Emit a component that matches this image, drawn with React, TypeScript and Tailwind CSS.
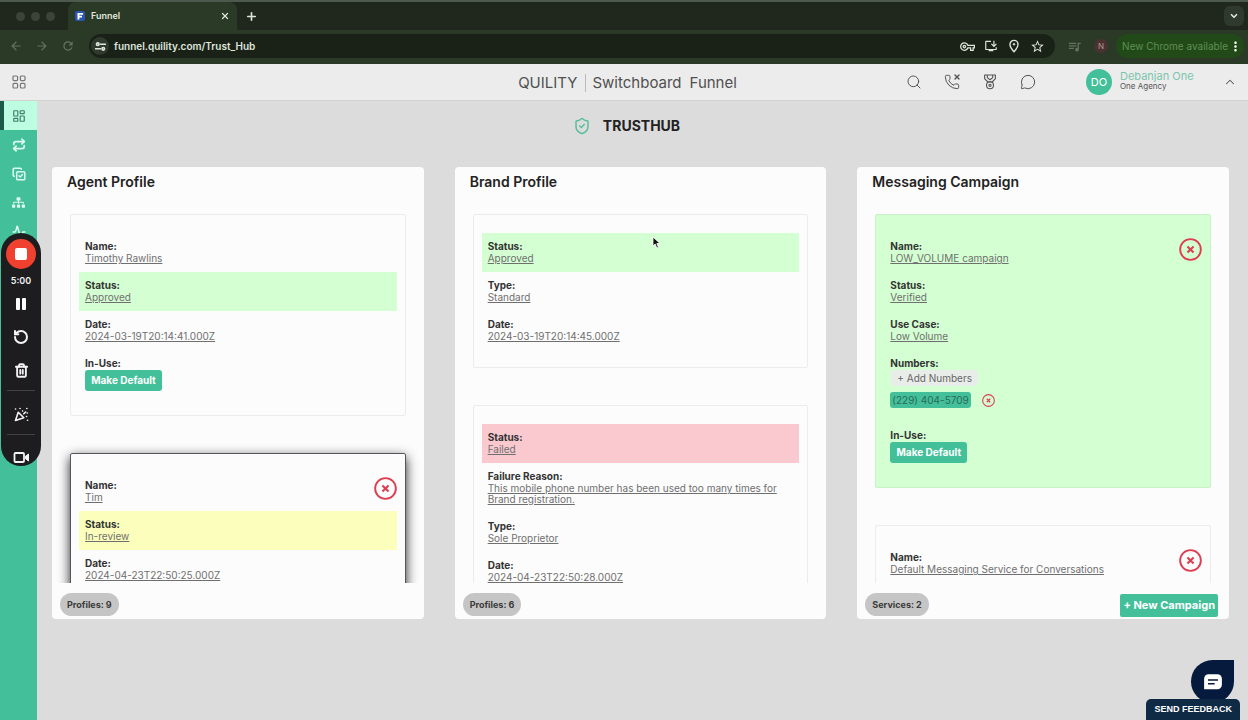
import type { ReactNode } from "react";
import clsx from "clsx";
import {
  Activity,
  ChevronDown,
  ChevronUp,
  CopyCheck,
  LayoutDashboard,
  MessageCircle,
  Phone,
  Plus,
  Repeat,
  RotateCcw,
  Search,
  ShieldCheck,
  Trash2,
  Video,
  X,
} from "lucide-react";
import { FaSitemap } from "react-icons/fa";
import {
  MdArrowBack,
  MdArrowForward,
  MdMoreVert,
  MdOutlineInstallDesktop,
  MdOutlineVpnKey,
  MdQueueMusic,
  MdRefresh,
  MdStarBorder,
} from "react-icons/md";

const BrowserBar = () => (
  <div className="border-t-2 border-[#4d594c] bg-[#20281e] text-[#dfe5dc]">
    <div className="flex h-7 items-center">
      <div className="flex w-[68px] items-center gap-[6px] pl-4">
        <span className="size-[9px] rounded-full bg-[#3b433a]" />
        <span className="size-[9px] rounded-full bg-[#3b433a]" />
        <span className="size-[9px] rounded-full bg-[#3b433a]" />
      </div>
      <div className="flex h-full w-[169px] items-center rounded-t-lg bg-[#2b3927] px-[7px]">
        <svg className="size-[10px]" viewBox="0 0 10 10">
          <rect width="10" height="10" rx="2" fill="#2856b0" />
          <path d="M2.5 2h5.5v1.8H4.4v1H7v1.7H4.4V8.5H2.5z" fill="#fff" />
        </svg>
        <span className="ml-[6px] flex-1 text-[9px] font-semibold">Funnel</span>
        <button aria-label="Close tab">
          <X size={10} strokeWidth={3} />
        </button>
      </div>
      <button aria-label="New tab" className="ml-2">
        <Plus size={13} strokeWidth={3} />
      </button>
      <button
        aria-label="Search tabs"
        className="mr-1 ml-auto flex size-5 items-center justify-center rounded-md bg-[#30392e]"
      >
        <ChevronDown size={10} strokeWidth={4} />
      </button>
    </div>
    <div className="flex h-[34px] items-center bg-[#2b3927] pr-1 pb-[2px] pl-[9px]">
      <div className="flex w-20 items-center gap-3 text-[#66705f]">
        <MdArrowBack size={14} />
        <MdArrowForward size={14} />
        <MdRefresh size={14} />
      </div>
      <div className="flex h-6 flex-1 items-center rounded-full bg-[#1a2218] pr-[10px] pl-[2px]">
        <span className="flex size-[18px] items-center justify-center rounded-full bg-[#30392e]">
          <svg
            className="size-[11px]"
            viewBox="0 0 12 12"
            fill="none"
            stroke="currentColor"
            strokeWidth="1.8"
          >
            <circle cx="3" cy="3.5" r="1.4" />
            <path d="M5.5 3.5H12M0 8.5h6.5" />
            <circle cx="9" cy="8.5" r="1.4" />
          </svg>
        </span>
        <span className="ml-[5px] flex-1 text-[10px] font-semibold">
          funnel.quility.com/Trust_Hub
        </span>
        <div className="flex items-center gap-[9px]">
          <MdOutlineVpnKey size={15} />
          <MdOutlineInstallDesktop size={14} />
          <svg className="size-[14px]" viewBox="0 0 14 14" fill="none" stroke="currentColor">
            <path d="M7 12.8C4.400 9.800 3 7.600 3 5.400a4 4 0 0 1 8 0c0 2.200-1.400 4.400-4 7.400z" strokeWidth="1.400" />
            <circle cx="7" cy="5.300" r=".8" fill="currentColor" />
          </svg>
          <MdStarBorder size={15} />
        </div>
      </div>
      <MdQueueMusic size={15} className="ml-3 text-[#66705f]" />
      <span className="mr-2 ml-3 flex size-[14px] items-center justify-center rounded-full bg-[#4a3230] text-[8px] text-[#b09a98]">
        N
      </span>
      <button className="flex h-6 items-center rounded-full bg-[#224a18] pr-px pl-[6px] text-[10px] text-[#5f8f55]">
        New Chrome available
        <MdMoreVert size={15} className="text-white" />
      </button>
    </div>
  </div>
);

const MedalIcon = () => (
  <svg
    className="size-4"
    viewBox="0 0 16 16"
    fill="none"
    stroke="currentColor"
    strokeWidth="1.1"
    strokeLinejoin="round"
  >
    <path d="M2.600 1h10.800v3.600L10.200 8H5.800L2.600 4.600z" />
    <path d="M5.300 1v2.600L8 5.800l2.700-2.200V1" />
    <circle cx="8" cy="11.300" r="3.500" />
    <circle cx="8" cy="11.300" r="1.100" />
  </svg>
);

const Header = () => (
  <header className="grid h-[37px] grid-cols-[1fr_auto_1fr] items-center border-b border-[#d2d2d2] bg-[#ececec] pr-[11px] pl-3 text-[#555]">
    <button aria-label="Apps" className="w-fit">
      <svg
        className="size-[14px]"
        viewBox="0 0 14 14"
        fill="none"
        stroke="#777"
        strokeWidth="1.2"
      >
        <rect x="1" y="1" width="4.6" height="4.6" rx="1" />
        <rect x="8.4" y="1" width="4.6" height="4.6" rx="1" />
        <rect x="1" y="8.4" width="4.6" height="4.6" rx="1" />
        <rect x="8.4" y="8.4" width="4.6" height="4.6" rx="1" />
      </svg>
    </button>
    <div className="flex items-center pt-[2px] pl-[6px] text-[15px] text-[#505050]">
      <span>QUILITY</span>
      <span className="mr-[6px] ml-2 h-[18px] w-px bg-[#bbb]" />
      <span>Switchboard</span>
      <span className="ml-2">Funnel</span>
    </div>
    <div className="flex items-center justify-end">
      <div className="flex items-center gap-[22px]">
        <button aria-label="Search">
          <Search size={16} strokeWidth={1.5} />
        </button>
        <button aria-label="Missed calls">
          <span className="relative block">
            <Phone size={16} strokeWidth={1.5} />
            <X size={8} strokeWidth={4} className="absolute -top-px -right-px" />
          </span>
        </button>
        <button aria-label="Awards">
          <MedalIcon />
        </button>
        <button aria-label="Messages">
          <MessageCircle size={16} strokeWidth={1.5} />
        </button>
      </div>
      <span className="ml-[50px] flex size-[26px] items-center justify-center rounded-full bg-[#43bf99] text-[11px] text-white">
        DO
      </span>
      <div className="ml-2 w-[103px] pb-[2px]">
        <p className="text-[11px] leading-[11px] text-[#7cc5ae]">Debanjan One</p>
        <p className="text-[8px] leading-[9px]">One Agency</p>
      </div>
      <button aria-label="Collapse">
        <ChevronUp size={14} strokeWidth={1.8} />
      </button>
    </div>
  </header>
);

const Sidebar = () => (
  <nav className="flex w-[37px] shrink-0 flex-col bg-[#43bf99] text-[#dcfff2]">
    <a
      href="#dashboard"
      aria-label="Dashboard"
      className="flex h-[29px] items-center justify-center border-l-4 border-[#1c5a49] bg-[#bdfde2] pr-1 text-[#3f7d6a]"
    >
      <LayoutDashboard size={14} strokeWidth={2} />
    </a>
    <a href="#transfers" aria-label="Transfers" className="flex h-[29px] items-center justify-center">
      <Repeat size={14} strokeWidth={3} />
    </a>
    <a href="#tasks" aria-label="Tasks" className="flex h-[29px] items-center justify-center">
      <CopyCheck size={14} strokeWidth={2.5} />
    </a>
    <a href="#team" aria-label="Team" className="flex h-[29px] items-center justify-center">
      <FaSitemap size={13} />
    </a>
    <a href="#activity" aria-label="Activity" className="flex h-[29px] items-center justify-center">
      <Activity size={14} strokeWidth={2.5} />
    </a>
  </nav>
);

const Recorder = () => (
  <div className="absolute top-[233px] left-px flex h-[233px] w-10 flex-col items-center overflow-hidden rounded-[20px] bg-[#1d1c1e] text-[#f3f3f3]">
    <button
      aria-label="Stop recording"
      className="mt-[6px] flex size-[30px] shrink-0 items-center justify-center rounded-full bg-[#f0402f]"
    >
      <span className="size-3 rounded-[2px] bg-white" />
    </button>
    <span className="mt-[5px] text-[9px] leading-[14px] font-semibold">5:00</span>
    <button aria-label="Pause" className="mt-[10px] flex gap-[2px]">
      <span className="h-3 w-[4px] rounded-[1px] bg-white" />
      <span className="h-3 w-[4px] rounded-[1px] bg-white" />
    </button>
    <button aria-label="Restart" className="mt-[19px]">
      <RotateCcw size={16} strokeWidth={3} />
    </button>
    <button aria-label="Delete" className="mt-[18px]">
      <Trash2 size={15} strokeWidth={3} />
    </button>
    <hr className="mt-3 w-7 border-[#424144]" />
    <button aria-label="Effects" className="mt-4">
      <svg className="size-[15px]" viewBox="0 0 15 15" fill="none" stroke="currentColor" strokeWidth="1.6">
        <path d="M4.2 5.2 9.8 10.8 1.5 13.5z" strokeLinejoin="round" />
        <path
          d="M1.5 2h.1M6 1.5h.1M8.5 4h.1M12.8 1.5h.1M9.8 6.8l1.8-1.8M13.3 6h.1M12.5 9.5h.1M13.5 13.2h.1"
          strokeLinecap="round"
        />
      </svg>
    </button>
    <hr className="mt-3 w-7 border-[#424144]" />
    <button aria-label="Camera" className="mt-[14px]">
      <svg className="size-[17px]" viewBox="0 0 17 17" fill="none" stroke="currentColor" strokeWidth="1.800">
        <rect x="1.500" y="4" width="9.500" height="9" rx="1" />
        <path d="M12.500 7.200 15.500 5v7l-3-2.200z" fill="currentColor" strokeWidth="1" />
      </svg>
    </button>
  </div>
);

const CloseIcon = ({ className }: { className: string }) => (
  <svg className={className} viewBox="0 0 24 24" fill="none" stroke="#dc3f52" strokeWidth="2">
    <circle cx="12" cy="12" r="10.8" />
    <path d="M8.8 8.8l6.4 6.4M15.2 8.8l-6.4 6.4" strokeWidth="2.2" />
  </svg>
);

const tones = {
  none: "",
  green: "bg-[#d4ffd2]",
  yellow: "bg-[#fbffbb]",
  red: "bg-[#f9c9cf]",
};

type FieldProps = {
  label: string;
  value?: string;
  tone?: keyof typeof tones;
  children?: ReactNode;
};

const Field = ({ label, value, tone = "none", children }: FieldProps) => (
  <div className={clsx("px-[6px] pt-[6px]", value ? "pb-2" : "pb-[7px]", tones[tone])}>
    <p className="text-[10px] leading-[14px] font-bold text-[#333]">{label}:</p>
    {value && (
      <p className="text-[10px] leading-[11px] text-[#6f6f6f] underline underline-offset-1">{value}</p>
    )}
    {children}
  </div>
);

const MakeDefault = () => (
  <button className="block h-[21px] w-[77px] rounded-[3px] bg-[#43bf99] text-[10px] font-bold text-white">
    Make Default
  </button>
);

type ItemProps = {
  children: ReactNode;
  className?: string;
  removable?: boolean;
};

const Item = ({ children, className = "border-[#ececec]", removable }: ItemProps) => (
  <div className={clsx("relative rounded-[2px] border px-2 pt-[18px] pb-[17px]", className)}>
    {children}
    {removable && (
      <button aria-label="Remove" className="absolute top-[23px] right-2">
        <CloseIcon className="size-[23px]" />
      </button>
    )}
  </div>
);

type PanelProps = {
  title: string;
  count: string;
  action?: ReactNode;
  children: ReactNode;
};

const Panel = ({ title, count, action, children }: PanelProps) => (
  <section className="rounded-[4px] bg-[#fcfcfc]">
    <h2 className="px-[15px] pt-[3px] text-sm leading-[23px] font-semibold text-[#222]">{title}</h2>
    <div className="flex h-[390px] flex-col gap-[37px] overflow-hidden px-[18px] pt-[21px]">
      {children}
    </div>
    <div className="flex h-9 items-center justify-between px-2 pt-[6px]">
      <span className="rounded-full bg-[#c5c5c5] px-[7px] text-[9px] leading-[23px] font-bold text-[#3a3a3a]">
        {count}
      </span>
      {action}
    </div>
  </section>
);

const App = () => {
  return (
    <div className="relative flex min-h-screen flex-col bg-[#dcdcdc] font-['Inter',sans-serif]">
      <BrowserBar />
      <Header />
      <div className="flex flex-1">
        <Sidebar />
        <main className="min-w-0 flex-1 pr-[19px] pl-[15px]">
          <h1 className="flex h-[66px] items-center justify-center gap-3 pr-7 pb-4 text-sm font-bold text-[#222]">
            <ShieldCheck size={18} strokeWidth={2} className="text-[#58bd9e]" />
            TRUSTHUB
          </h1>
          <div className="grid grid-cols-3 gap-[31px]">
            <Panel title="Agent Profile" count="Profiles: 9">
              <Item>
                <Field label="Name" value="Timothy Rawlins" />
                <Field label="Status" value="Approved" tone="green" />
                <Field label="Date" value="2024-03-19T20:14:41.000Z" />
                <Field label="In-Use">
                  <MakeDefault />
                </Field>
              </Item>
              <Item removable className="border-[#55555f] shadow-[0_4px_12px_0_#222]">
                <Field label="Name" value="Tim" />
                <Field label="Status" value="In-review" tone="yellow" />
                <Field label="Date" value="2024-04-23T22:50:25.000Z" />
              </Item>
            </Panel>

            <Panel title="Brand Profile" count="Profiles: 6">
              <Item>
                <Field label="Status" value="Approved" tone="green" />
                <Field label="Type" value="Standard" />
                <Field label="Date" value="2024-03-19T20:14:45.000Z" />
              </Item>
              <Item>
                <Field label="Status" value="Failed" tone="red" />
                <Field
                  label="Failure Reason"
                  value="This mobile phone number has been used too many times for Brand registration."
                />
                <Field label="Type" value="Sole Proprietor" />
                <Field label="Date" value="2024-04-23T22:50:28.000Z" />
              </Item>
            </Panel>

            <Panel
              title="Messaging Campaign"
              count="Services: 2"
              action={
                <button className="mt-[3px] mr-[3px] h-[23px] rounded-[2px] bg-[#43bf99] px-[3px] text-[11px] font-bold text-white">
                  + New Campaign
                </button>
              }
            >
              <Item removable className="border-[#c9f0c7] bg-[#d4ffd2]">
                <Field label="Name" value="LOW_VOLUME campaign" />
                <Field label="Status" value="Verified" />
                <Field label="Use Case" value="Low Volume" />
                <Field label="Numbers">
                  <button className="ml-px block h-4 rounded-[4px] bg-[#e9ede9] px-[6px] text-[10px] leading-4 text-[#666]">
                    + Add Numbers
                  </button>
                  <div className="flex items-center gap-[11px] pt-[6px] pb-[7px]">
                    <span className="rounded-[3px] bg-[#43bf99] px-[2px] text-[10px] leading-4 text-[#2b6b58]">
                      (229) 404-5709
                    </span>
                    <button aria-label="Remove number">
                      <CloseIcon className="size-[13px]" />
                    </button>
                  </div>
                </Field>
                <Field label="In-Use">
                  <MakeDefault />
                </Field>
              </Item>
              <Item removable>
                <Field label="Name" value="Default Messaging Service for Conversations" />
              </Item>
            </Panel>
          </div>
        </main>
      </div>

      <Recorder />

      <svg className="absolute top-[236px] left-[652px] h-[13px] w-[9px]" viewBox="0 0 9 13">
        <path d="M1 1v9l2.2-2 1.6 4 1.6-.7-1.6-3.8H8z" fill="#111" stroke="#fff" strokeWidth=".8" />
      </svg>

      <div className="absolute right-2 bottom-0 flex flex-col items-end">
        <button
          aria-label="Open chat"
          className="mr-[6px] -mb-1 flex size-[43px] items-center justify-center rounded-full rounded-tr-[5px] bg-[#051a3c]"
        >
          <svg className="size-5" viewBox="0 0 18 18">
            <path d="M5 2h8a4 4 0 0 1 4 4v5.500a4 4 0 0 1-4 4H1V6a4 4 0 0 1 4-4z" fill="#fff" />
            <path d="M4.500 7.200h9M4.500 10.500h6" stroke="#051a3c" strokeWidth="1.300" />
          </svg>
        </button>
        <button className="relative h-[21px] rounded-t-[5px] bg-[#0f2a45] px-2 font-['Liberation_Sans',sans-serif] text-[9px] font-bold text-white">
          SEND FEEDBACK
        </button>
      </div>
    </div>
  );
};

export default App;
